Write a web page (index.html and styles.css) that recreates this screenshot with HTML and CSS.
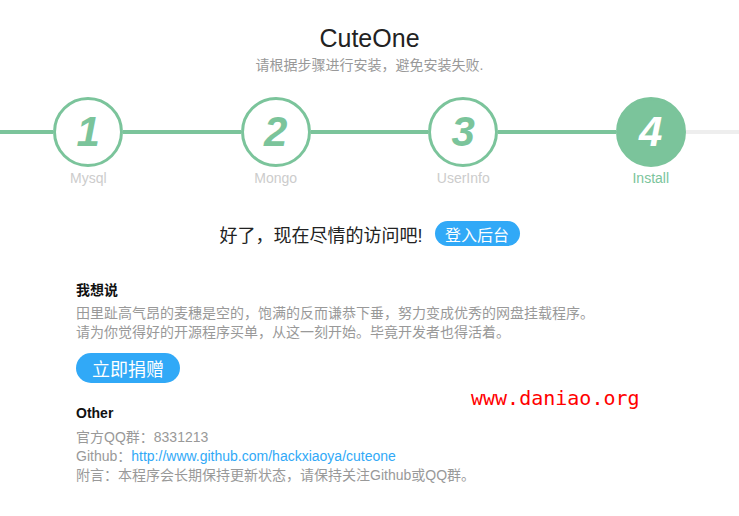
FILE: index.html
```html
<!DOCTYPE html>
<html lang="zh-CN">
<head>
<meta charset="utf-8">
<title>CuteOne</title>
<link rel="stylesheet" href="styles.css">
</head>
<body>
<div class="page">
  <header class="head">
    <h1 class="title">CuteOne</h1>
    <p class="subtitle">请根据步骤进行安装，避免安装失败.</p>
  </header>

  <div class="steps">
    <div class="step">
      <div class="track"><span class="seg"></span><span class="circle">1</span><span class="seg"></span></div>
      <div class="label">Mysql</div>
    </div>
    <div class="step">
      <div class="track"><span class="seg"></span><span class="circle">2</span><span class="seg"></span></div>
      <div class="label">Mongo</div>
    </div>
    <div class="step">
      <div class="track"><span class="seg"></span><span class="circle">3</span><span class="seg"></span></div>
      <div class="label">UserInfo</div>
    </div>
    <div class="step step-active">
      <div class="track"><span class="seg"></span><span class="circle">4</span><span class="seg seg-todo"></span></div>
      <div class="label">Install</div>
    </div>
  </div>

  <div class="done">
    <span class="done-text">好了，现在尽情的访问吧!</span>
    <a class="btn btn-small" href="#">登入后台</a>
  </div>

  <section class="block">
    <h3 class="block-title">我想说</h3>
    <p class="block-text">田里趾高气昂的麦穗是空的，饱满的反而谦恭下垂，努力变成优秀的网盘挂载程序。<br>请为你觉得好的开源程序买单，从这一刻开始。毕竟开发者也得活着。</p>
    <a class="btn btn-large" href="#">立即捐赠</a>
  </section>

  <section class="block block-other">
    <h3 class="block-title">Other</h3>
    <p class="block-text block-text-other">官方QQ群：8331213<br>Github：<a class="link" href="#">http://www.github.com/hackxiaoya/cuteone</a><br>附言：本程序会长期保持更新状态，请保持关注Github或QQ群。</p>
  </section>

  <div class="watermark">www.daniao.org</div>
</div>
</body>
</html>
```

FILE: styles.css
```css
html, body {
  margin: 0;
  padding: 0;
  background: #ffffff;
}

body {
  font-family: "Liberation Sans", "Noto Sans CJK SC", sans-serif;
  color: #333;
  overflow: hidden;
}

.page {
  position: relative;
  width: 739px;
  min-height: 516px;
}

.head {
  padding-top: 23px;
  text-align: center;
}

.title {
  margin: 0;
  font-size: 25px;
  line-height: 30px;
  font-weight: normal;
  color: #222;
}

.subtitle {
  margin: 2px 0 0;
  font-size: 14px;
  line-height: 20px;
  color: #999;
}

.steps {
  display: flex;
  justify-content: center;
  margin-top: 22px;
}

.step {
  flex: 0 0 187.5px;
  display: flex;
  flex-direction: column;
  align-items: stretch;
}

.track {
  display: flex;
  align-items: center;
  height: 70px;
}

.seg {
  flex: 1;
  height: 4px;
  background: #7bc49b;
}

.seg-todo {
  background: #eeeeee;
}

.circle {
  flex: 0 0 70px;
  height: 70px;
  box-sizing: border-box;
  border: 3px solid #7bc49b;
  border-radius: 50%;
  background: #fff;
  display: flex;
  align-items: center;
  justify-content: center;
  font-size: 42px;
  font-weight: bold;
  font-style: italic;
  color: #7bc49b;
  line-height: 1;
}

.step-active .circle {
  background: #7bc49b;
  color: #fff;
}

.label {
  margin-top: 3px;
  text-align: center;
  font-size: 14px;
  line-height: 16px;
  color: #cccccc;
}

.step-active .label {
  color: #7bc49b;
}

.done {
  margin-top: 35px;
  display: flex;
  justify-content: center;
  align-items: center;
  gap: 12px;
  height: 25px;
}

.done-text {
  font-size: 18px;
  color: #222;
}

.btn {
  display: inline-flex;
  align-items: center;
  justify-content: center;
  background: #31a9f7;
  color: #fff;
  text-decoration: none;
}

.btn-small {
  width: 85px;
  height: 25px;
  border-radius: 13px;
  font-size: 16px;
}

.btn-large {
  width: 104px;
  height: 30px;
  border-radius: 15px;
  font-size: 18px;
  margin-top: 11px;
}

.block {
  padding-left: 76px;
  margin-top: 35px;
}

.block-other {
  margin-top: 21px;
}

.block-title {
  margin: 0;
  font-size: 14px;
  line-height: 18px;
  font-weight: bold;
  color: #111;
}

.block-text {
  margin: 5px 0 0;
  font-size: 14px;
  line-height: 19px;
  color: #999;
}

.block-text-other {
  margin-top: 6px;
}

.link {
  color: #31a9f7;
  text-decoration: none;
}

.watermark {
  position: absolute;
  left: 471px;
  top: 386px;
  font-family: "DejaVu Sans Mono", monospace;
  font-size: 20px;
  line-height: 24px;
  color: #ff0000;
}
```
